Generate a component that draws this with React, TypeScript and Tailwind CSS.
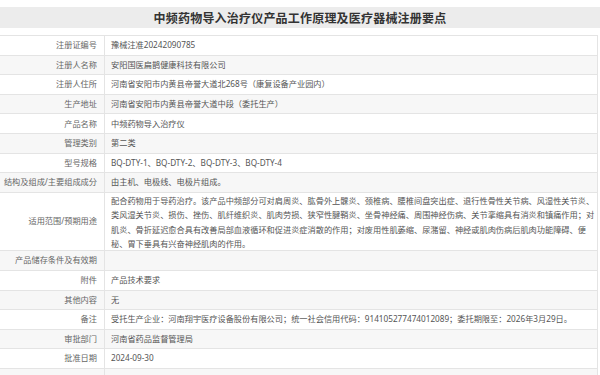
const rows: { label: string; value: string[]; tall?: boolean }[] = [
  { label: "注册证编号", value: ["豫械注准20242090785"] },
  { label: "注册人名称", value: ["安阳国医扁鹊健康科技有限公司"] },
  { label: "注册人住所", value: ["河南省安阳市内黄县帝誉大道北268号（康复设备产业园内）"] },
  { label: "生产地址", value: ["河南省安阳市内黄县帝誉大道中段（委托生产）"] },
  { label: "产品名称", value: ["中频药物导入治疗仪"] },
  { label: "管理类别", value: ["第二类"] },
  { label: "型号规格", value: ["BQ-DTY-1、BQ-DTY-2、BQ-DTY-3、BQ-DTY-4"] },
  { label: "结构及组成/主要组成成分", value: ["由主机、电极线、电极片组成。"] },
  {
    label: "适用范围/预期用途",
    tall: true,
    value: [
      "配合药物用于导药治疗。该产品中频部分可对肩周炎、肱骨外上髁炎、颈椎病、腰椎间盘突出症、退行性骨性关节病、风湿性关节炎、",
      "类风湿关节炎、损伤、挫伤、肌纤维织炎、肌肉劳损、狭窄性腱鞘炎、坐骨神经痛、周围神经伤病、关节挛缩具有消炎和镇痛作用；对",
      "肌炎、骨折延迟愈合具有改善局部血液循环和促进炎症消散的作用；对废用性肌萎缩、尿潴留、神经或肌肉伤病后肌肉功能障碍、便",
      "秘、胃下垂具有兴奋神经肌肉的作用。",
    ],
  },
  { label: "产品储存条件及有效期", value: [""] },
  { label: "附件", value: ["产品技术要求"] },
  { label: "其他内容", value: ["无"] },
  {
    label: "备注",
    value: ["受托生产企业：河南翔宇医疗设备股份有限公司；统一社会信用代码：914105277474012089；委托期限至：2026年3月29日。"],
  },
  { label: "审批部门", value: ["河南省药品监督管理局"] },
  { label: "批准日期", value: ["2024-09-30"] },
  { label: "", value: [""] },
];

export default function App() {
  return (
    <div
      className="w-[600px] h-[375px] overflow-hidden bg-white text-[8.2px]"
      style={{ fontFamily: '"Noto Sans", "Noto Sans CJK SC", sans-serif' }}
    >
      {/* Title bar */}
      <div className="pt-[7px]">
        <div
          className="h-[21px] bg-[#ececec] flex items-center justify-center text-[12px] font-bold text-[#333] tracking-[0.2px]"
          style={{ fontFamily: '"Noto Sans CJK SC", sans-serif' }}
        >
          中频药物导入治疗仪产品工作原理及医疗器械注册要点
        </div>
      </div>

      {/* Registration table */}
      <div className="mt-[7px] mr-[2px] border-t border-r border-[#e4e4e4]">
        {rows.map((row, i) => (
          <div
            key={i}
            className={`flex border-b border-[#e4e4e4] ${i % 2 === 1 ? "bg-[#f7f7f7]" : "bg-white"} ${
              row.tall ? "h-[58.6px]" : "h-[19.6px]"
            }`}
          >
            <div className="w-[105px] shrink-0 border-r border-[#e4e4e4] flex items-center justify-end pr-[7px] text-[#666] whitespace-nowrap">
              {row.label}
            </div>
            <div
              className={`flex-1 pl-[6px] flex flex-col text-[#555] whitespace-nowrap ${
                row.tall ? "justify-start pt-[1px] leading-[14.4px]" : "justify-center"
              }`}
            >
              {row.value.map((line, j) => (
                <div key={j}>{line}</div>
              ))}
            </div>
          </div>
        ))}
      </div>
    </div>
  );
}
